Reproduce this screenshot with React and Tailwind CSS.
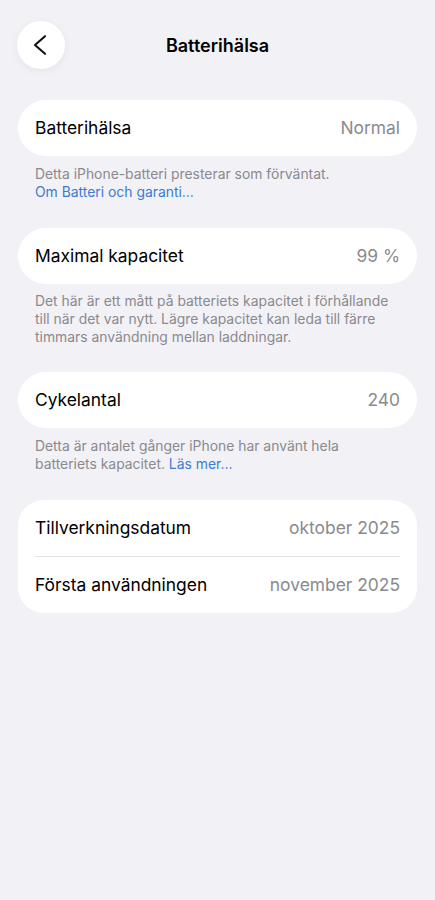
import React from "react";

function Row({ label, value }) {
  return (
    <div className="flex h-[56px] items-center justify-between">
      <span className="text-[17.4px] text-black">{label}</span>
      <span className="text-[17.4px] text-[#8a8a8e]">{value}</span>
    </div>
  );
}

export default function App() {
  return (
    <div
      className="min-h-[900px] w-full bg-[#f2f1f6] antialiased"
      style={{ fontFamily: "Inter, 'Noto Sans', sans-serif" }}
    >
      <div className="grid grid-cols-[48px_1fr_48px] items-center px-[17px] pt-[21px]">
        <button className="flex h-[48px] w-[48px] items-center justify-center rounded-full bg-white shadow-[0_2px_10px_rgba(0,0,0,0.06)]">
          <svg width="24" height="24" viewBox="0 0 24 24" fill="none">
            <path d="M16 3.2 L6 12 L16 20.8" stroke="#111" strokeWidth="2.1" strokeLinecap="round" strokeLinejoin="round" />
          </svg>
        </button>
        <div className="text-center text-[18px] font-semibold text-black">Batterihälsa</div>
        <div />
      </div>

      <div className="mx-[18px] mt-[31px] rounded-full bg-white px-[17px]">
        <Row label="Batterihälsa" value="Normal" />
      </div>
      <div className="mt-[9px] pl-[35px] pr-[40px] text-[13.9px] leading-[18px] text-[#8a8a8e]">
        Detta iPhone-batteri presterar som förväntat.
        <br />
        <span className="text-[#3a7bd5]">Om Batteri och garanti…</span>
      </div>

      <div className="mx-[18px] mt-[27px] rounded-full bg-white px-[17px]">
        <Row label="Maximal kapacitet" value="99 %" />
      </div>
      <div className="mt-[8px] pl-[35px] pr-[40px] text-[13.9px] leading-[18px] text-[#8a8a8e]">
        Det här är ett mått på batteriets kapacitet i förhållande till när det var nytt. Lägre kapacitet kan leda till färre timmars användning mellan laddningar.
      </div>

      <div className="mx-[18px] mt-[26px] rounded-full bg-white px-[17px]">
        <Row label="Cykelantal" value="240" />
      </div>
      <div className="mt-[9px] pl-[35px] pr-[40px] text-[13.9px] leading-[18px] text-[#8a8a8e]">
        Detta är antalet gånger iPhone har använt hela batteriets kapacitet.{" "}
        <span className="text-[#3a7bd5]">Läs mer…</span>
      </div>

      <div className="mx-[18px] mt-[27px] rounded-[26px] bg-white px-[17px]">
        <Row label="Tillverkningsdatum" value="oktober 2025" />
        <div className="h-px bg-[#e3e3e6]" />
        <Row label="Första användningen" value="november 2025" />
      </div>
    </div>
  );
}
